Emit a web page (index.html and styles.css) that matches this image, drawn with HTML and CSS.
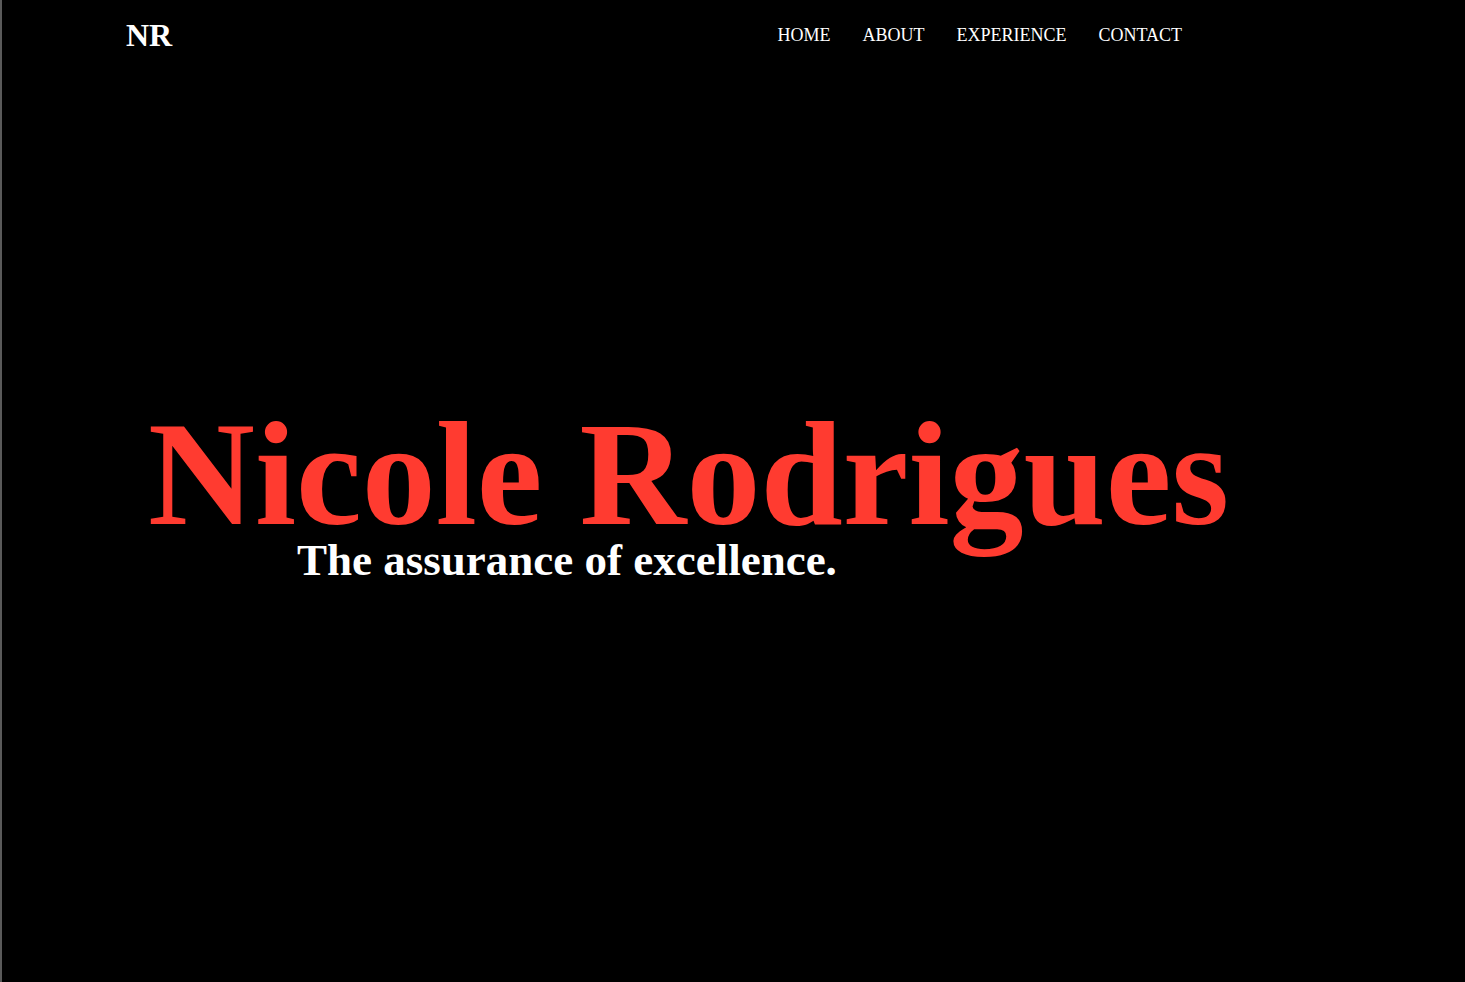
FILE: index.html
```html
<!DOCTYPE html>
<html lang="en">
<head>
<meta charset="utf-8">
<title>Nicole Rodrigues</title>
<link rel="stylesheet" href="styles.css">
</head>
<body>
<div class="page">
  <header class="site-header">
    <a class="logo" href="#">NR</a>
    <nav class="nav">
      <a href="#">HOME</a>
      <a href="#">ABOUT</a>
      <a href="#">EXPERIENCE</a>
      <a href="#">CONTACT</a>
    </nav>
  </header>
  <section class="hero">
    <h1 class="hero-name">Nicole Rodrigues</h1>
    <h2 class="hero-tagline">The assurance of excellence.</h2>
  </section>
</div>
</body>
</html>
```
FILE: styles.css
```css
html, body {
  margin: 0;
  padding: 0;
  background: #000;
}
body {
  font-family: "Liberation Serif", "Times New Roman", serif;
  color: #fff;
}
.page {
  min-height: 982px;
  box-sizing: border-box;
  border-left: 2px solid #5a5a5a;
}
.site-header {
  display: flex;
  justify-content: space-between;
  align-items: center;
  height: 70px;
  padding: 0 283px 0 124px;
}
.logo {
  color: #fff;
  text-decoration: none;
  font-weight: bold;
  font-size: 32px;
  padding-top: 1px;
}
.nav {
  display: flex;
  gap: 32px;
  padding-top: 1px;
}
.nav a {
  color: #fff;
  text-decoration: none;
  font-size: 18px;
}
.hero {
  display: flex;
  flex-direction: column;
  align-items: flex-start;
  padding: 342px 0 0 146px;
}
.hero-name {
  margin: 0;
  font-size: 148px;
  line-height: 125px;
  font-weight: bold;
  color: #ff3b30;
}
.hero-tagline {
  margin: 8px 0 0 149px;
  font-size: 45px;
  line-height: 30px;
  font-weight: bold;
  color: #fff;
}
```
